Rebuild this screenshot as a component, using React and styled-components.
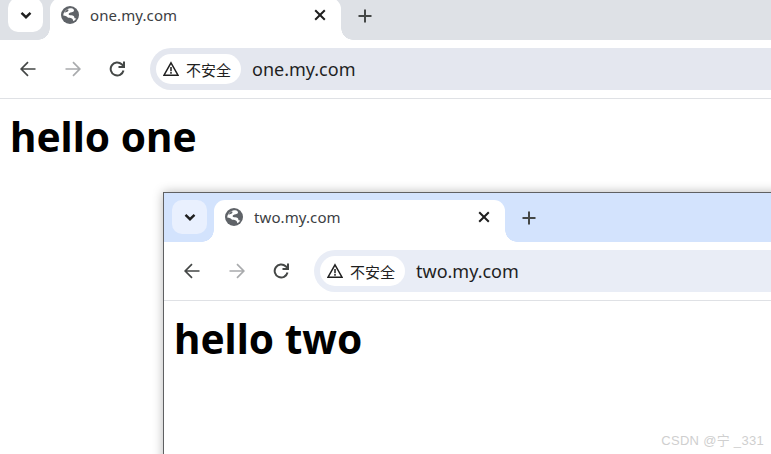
import React from "react";
import styled, { createGlobalStyle } from "styled-components";

const Global = createGlobalStyle`
  html, body { margin: 0; padding: 0; background: #fff; overflow: hidden; }
  #root { width: 771px; height: 454px; }
`;

const Desktop = styled.div`
  position: relative;
  width: 771px;
  height: 454px;
  overflow: hidden;
  background: #fff;
  font-family: "Noto Sans", "Noto Sans CJK SC", sans-serif;
`;

const Win = styled.section`
  position: absolute;
  top: ${(p) => p.$top}px;
  left: ${(p) => p.$left}px;
  width: ${(p) => p.$width}px;
  height: ${(p) => p.$height}px;
  box-sizing: border-box;
  background: #fff;
  overflow: hidden;
  border-top: ${(p) => (p.$framed ? "1px solid #5f6062" : "none")};
  border-left: ${(p) => (p.$framed ? "1px solid #5f6062" : "none")};
  box-shadow: ${(p) => (p.$framed ? "0 0 10px rgba(0, 0, 0, 0.28)" : "none")};
`;

const Strip = styled.div`
  display: flex;
  align-items: flex-end;
  height: 49px;
  padding-left: 8px;
  background: ${(p) => p.$strip};
  box-sizing: border-box;
`;

const TabMenu = styled.div`
  width: 35px;
  height: 34px;
  margin-bottom: 8px;
  margin-right: 7px;
  border-radius: 10px;
  background: ${(p) => p.$bg};
  display: flex;
  align-items: center;
  justify-content: center;
  color: #1f1f1f;
`;

const Tab = styled.div`
  position: relative;
  width: 291px;
  height: 42px;
  padding: 0 14px 8px 11px;
  box-sizing: border-box;
  background: #fff;
  border-radius: 11px 11px 0 0;
  display: flex;
  align-items: center;
  &::before, &::after {
    content: "";
    position: absolute;
    bottom: 0;
    width: 12px;
    height: 12px;
  }
  &::before {
    left: -12px;
    background: radial-gradient(circle at 0 0, transparent 11.5px, #fff 12px);
  }
  &::after {
    right: -12px;
    background: radial-gradient(circle at 100% 0, transparent 11.5px, #fff 12px);
  }
`;

const Favicon = styled.svg`
  width: 18px;
  height: 18px;
  flex: none;
`;

const TabTitle = styled.span`
  flex: 1;
  margin-left: 11px;
  font-size: 15px;
  letter-spacing: 0.1px;
  color: #3c4043;
  white-space: nowrap;
`;

const GlyphSvg = styled.svg`
  flex: none;
  fill: none;
  stroke: ${(p) => p.$color || "#3c4043"};
  stroke-width: ${(p) => p.$weight || 2};
`;

const NewTab = styled.div`
  margin: 0 0 14px 17px;
  height: 20px;
  display: flex;
  align-items: center;
`;

const Toolbar = styled.div`
  display: flex;
  align-items: center;
  height: 58px;
  padding-left: 20px;
  background: #fff;
  border-radius: 13px 0 0 0;
  border-bottom: 1px solid #dfe1e5;
  box-sizing: content-box;
`;

const NavGroup = styled.div`
  display: flex;
  align-items: center;
  gap: 28.5px;
  margin-right: 25px;
`;

const Omnibox = styled.div`
  flex: 1;
  height: 42px;
  padding-left: 6px;
  background: ${(p) => p.$bg};
  border-radius: 21px 0 0 21px;
  display: flex;
  align-items: center;
`;

const Chip = styled.div`
  height: 30px;
  width: 85px;
  box-sizing: border-box;
  padding-left: 7px;
  border-radius: 15px;
  background: #fff;
  display: flex;
  align-items: center;
  gap: 7px;
  font-size: 15px;
  color: #1f1f1f;
  font-family: "Noto Sans CJK SC", sans-serif;
  font-weight: 400;
`;

const Url = styled.span`
  margin-left: 11px;
  font-size: 18px;
  color: #1f1f1f;
`;

const Page = styled.main`
  padding: 13px 10px;
`;

const Heading = styled.h1`
  margin: 0;
  font-size: 40.6px;
  line-height: 50px;
  font-weight: 700;
  color: #000;
`;

const Watermark = styled.div`
  position: absolute;
  right: 7px;
  bottom: 5px;
  font-size: 13px;
  letter-spacing: 0.3px;
  color: #cfcfcf;
  font-family: "Liberation Sans", "Noto Sans CJK SC", sans-serif;
`;

const Globe = () => (
  <Favicon viewBox="0 0 18 18">
    <circle cx="9" cy="9" r="9" fill="#5f6368" />
    <path
      d="M10.500 2.200c3 .5 3 2.800 1.600 3.600-1.700 1-3.800.6-4.400 2-.5 1.200 1 1.500 2.600 1.500 2 0 3 1 3 2.200.1 1 1.300 1.100 2 .6-.6 1.500-1.500 2.500-2.800 3.200-.6-1.200-.4-2.300-1.700-2.900-1.500-.6-3-.2-4.400-1.100C6.400 10.400 4.500 9.600 2.200 9.400c.2-2.600 1.800-5 3.800-6 1.300-.8 3-1.300 4.500-1.200z"
      fill="#fff"
    />
    <path d="M7 3.200c.9.900.4 2-.7 2.500-1 .5-2 .4-2.800 1.200.5-1.600 1.900-3.100 3.500-3.700z" fill="#5f6368" />
  </Favicon>
);
const Chevron = () => (
  <GlyphSvg width="14" height="14" viewBox="0 0 14 14" $color="#1f1f1f" $weight="2.400">
    <path d="M2.500 4.800 7 9.200l4.500-4.400" />
  </GlyphSvg>
);
const Close = () => (
  <GlyphSvg width="14" height="14" viewBox="0 0 14 14" $color="#1f1f1f" $weight="2">
    <path d="M2.200 2.200l9.600 9.600M11.800 2.200l-9.600 9.600" />
  </GlyphSvg>
);
const Plus = () => (
  <GlyphSvg width="14" height="14" viewBox="0 0 14 14" $color="#444746" $weight="2">
    <path d="M7 .5v13M.5 7h13" />
  </GlyphSvg>
);
const Back = () => (
  <GlyphSvg width="16" height="16" viewBox="0 0 16 16" $color="#444746" $weight="1.700">
    <path d="M15.500 8H1.500M8 1.200 1.200 8 8 14.800" />
  </GlyphSvg>
);
const Forward = () => (
  <GlyphSvg width="16" height="16" viewBox="0 0 16 16" $color="#a9abad" $weight="1.700">
    <path d="M.5 8h14M8 1.200 14.800 8 8 14.800" />
  </GlyphSvg>
);
const Reload = () => (
  <GlyphSvg width="16" height="16" viewBox="0 0 16 16" $color="#444746" $weight="2">
    <path d="M14.500 9.500A6.500 6.500 0 1 1 12.700 3.300L14.800 5.400" />
    <path d="M15 .5v5.500H9.500" />
  </GlyphSvg>
);
const Warn = () => (
  <GlyphSvg width="16" height="16" viewBox="0 0 16 16" $color="#1f1f1f" $weight="1.500">
    <path d="M8 1.800 15 14.200H1Z" />
    <path d="M8 6v4.200M8 11v1.800" />
  </GlyphSvg>
);

function BrowserWindow({ host, title, strip, menu, omni, framed, top, left, width, height }) {
  return (
    <Win $framed={framed} $top={top} $left={left} $width={width} $height={height}>
      <Strip $strip={strip}>
        <TabMenu $bg={menu}><Chevron /></TabMenu>
        <Tab>
          <Globe />
          <TabTitle>{host}</TabTitle>
          <Close />
        </Tab>
        <NewTab><Plus /></NewTab>
      </Strip>
      <Toolbar>
        <NavGroup>
          <Back />
          <Forward />
          <Reload />
        </NavGroup>
        <Omnibox $bg={omni}>
          <Chip><Warn />不安全</Chip>
          <Url>{host}</Url>
        </Omnibox>
      </Toolbar>
      <Page><Heading>{title}</Heading></Page>
    </Win>
  );
}

export default function App() {
  return (
    <Desktop>
      <Global />
      <BrowserWindow
        host="one.my.com"
        title="hello one"
        strip="#dee1e6"
        menu="#ffffff"
        omni="#e4e7ef"
        top={-9}
        left={0}
        width={771}
        height={463}
      />
      <BrowserWindow
        host="two.my.com"
        title="hello two"
        strip="#d3e3fd"
        menu="#e9f0fe"
        omni="#e9edf6"
        framed
        top={192}
        left={163}
        width={700}
        height={300}
      />
      <Watermark>CSDN @宁 _331</Watermark>
    </Desktop>
  );
}
